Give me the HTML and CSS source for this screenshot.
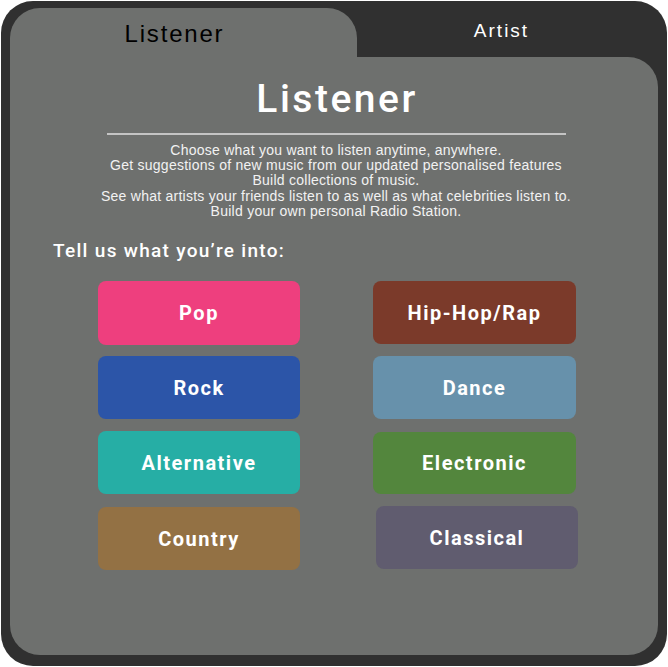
FILE: index.html
```html
<!DOCTYPE html>
<html>
<head>
<meta charset="utf-8">
<link rel="stylesheet" href="styles.css">
</head>
<body>
<div class="frame">
  <div class="tabs">
    <div class="tab tab-active">Listener</div>
    <div class="tab tab-other">Artist</div>
  </div>
  <div class="panel">
    <h1 class="title">Listener</h1>
    <div class="rule"></div>
    <p class="desc">Choose what you want to listen anytime, anywhere.<br>
    Get suggestions of new music from our updated personalised features<br>
    Build collections of music.<br>
    See what artists your friends listen to as well as what celebrities listen to.<br>
    Build your own personal Radio Station.</p>
    <h2 class="prompt">Tell us what you’re into:</h2>
    <div class="genres">
      <div class="genre pop">Pop</div>
      <div class="genre hiphop">Hip-Hop/Rap</div>
      <div class="genre rock">Rock</div>
      <div class="genre dance">Dance</div>
      <div class="genre alt">Alternative</div>
      <div class="genre electronic">Electronic</div>
      <div class="genre country">Country</div>
      <div class="genre classical">Classical</div>
    </div>
  </div>
</div>
</body>
</html>
```
FILE: styles.css
```css
html, body {
  margin: 0;
  padding: 0;
  background: #ffffff;
}
body {
  padding: 1px;
}
.frame {
  box-sizing: border-box;
  width: 666px;
  height: 665px;
  background: #303030;
  border-radius: 32px;
  padding: 7px 9px 11px 9px;
  display: flex;
  flex-direction: column;
}
.tabs {
  display: flex;
  height: 49px;
  flex: none;
}
.tab {
  display: flex;
  align-items: center;
  justify-content: center;
  font-family: "Liberation Sans", Arial, sans-serif;
}
.tab-active {
  box-sizing: border-box;
  width: 347px;
  background: #6e706e;
  border-radius: 30px 30px 0 0;
  color: #000000;
  font-size: 24px;
  letter-spacing: 1.8px;
  padding: 3px 18px 0 0;
}
.tab-other {
  flex: 1;
  color: #ffffff;
  font-size: 19px;
  letter-spacing: 2px;
  padding-right: 12px;
  padding-bottom: 4px;
}
.panel {
  flex: 1;
  background: #6e706e;
  border-radius: 0 30px 30px 30px;
  display: flex;
  flex-direction: column;
  align-items: center;
}
.title {
  margin: 19px 0 0 6px;
  font-family: Roboto, "DejaVu Sans", sans-serif;
  font-weight: 500;
  font-size: 39px;
  line-height: 46px;
  letter-spacing: 2.5px;
  color: #ffffff;
}
.rule {
  width: 459px;
  height: 2px;
  background: #c4c4c4;
  margin: 11px 0 0 4px;
}
.desc {
  margin: 8px 0 0 4px;
  font-family: "Liberation Sans", Arial, sans-serif;
  font-size: 14px;
  line-height: 15.2px;
  letter-spacing: 0.25px;
  color: #f2f2f2;
  text-align: center;
}
.prompt {
  align-self: flex-start;
  margin: 20px 0 0 43px;
  font-family: Roboto, "DejaVu Sans", sans-serif;
  font-weight: 500;
  font-size: 19px;
  line-height: 24px;
  letter-spacing: 1.3px;
  color: #ffffff;
}
.genres {
  align-self: flex-start;
  margin: 18px 0 0 88px;
  display: grid;
  grid-template-columns: 202px 203px;
  grid-auto-rows: 64px;
  column-gap: 73px;
  row-gap: 11px;
}
.genre {
  border-radius: 8px;
  display: flex;
  align-items: center;
  justify-content: center;
  font-family: Roboto, "DejaVu Sans", sans-serif;
  font-weight: 700;
  font-size: 20px;
  letter-spacing: 1.5px;
  color: #ffffff;
}
.pop { background: #ee3f7e; }
.hiphop { background: #7b3a2a; margin-bottom: 1px; }
.rock { background: #2c55a8; margin-bottom: 1px; }
.dance { background: #6791ab; margin-bottom: 1px; }
.alt { background: #26aea5; margin-bottom: 1px; }
.electronic { background: #53863d; margin: 1px 0 1px 0; }
.country { background: #937144; margin-top: 1px; }
.classical { background: #605c6f; margin: 0 -2px 1px 3px; }
```
